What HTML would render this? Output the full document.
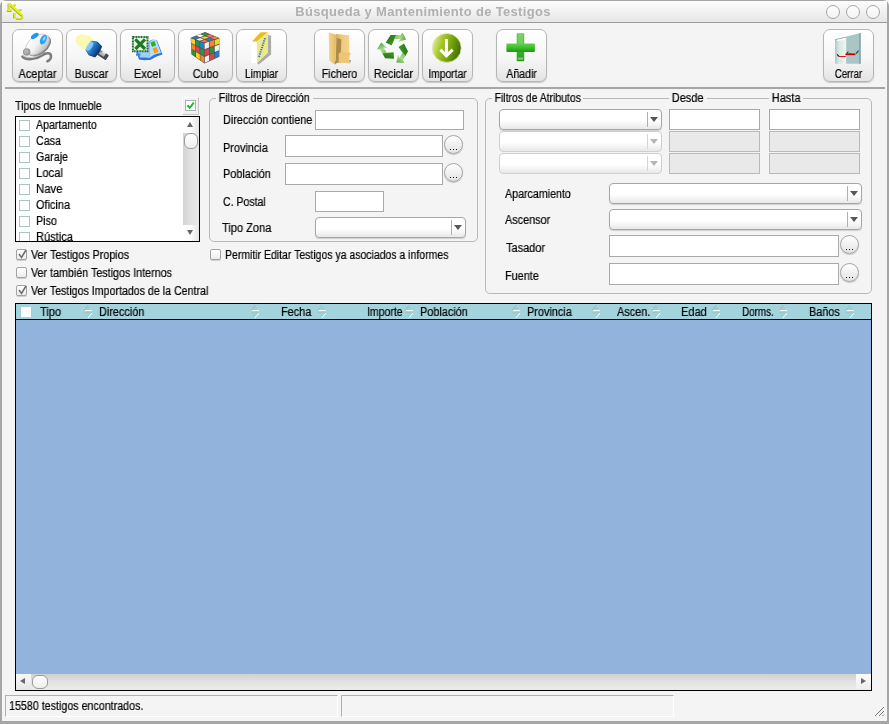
<!DOCTYPE html>
<html><head><meta charset="utf-8">
<style>
*{box-sizing:border-box;margin:0;padding:0}
html,body{width:889px;height:724px;overflow:hidden;background:#f4f4f4}
body{font-family:"Liberation Sans",sans-serif;font-size:12px;color:#000;-webkit-text-stroke:0.2px #000;position:relative}
.abs{position:absolute}
#win{position:absolute;left:0;top:0;width:889px;height:724px;background:#f4f4f4;border-radius:6px 6px 0 0;overflow:hidden}
#frameL{left:0;top:0;width:2px;height:724px;background:#a6a6a6}
#frameR{left:887px;top:0;width:2px;height:724px;background:#a6a6a6}
#frameB{left:0;top:721px;width:889px;height:3px;background:#a6a6a6}
#frameT{left:0;top:0;width:889px;height:1px;background:#a6a6a6}
#title{left:2px;top:1px;width:885px;height:22px;background:linear-gradient(#fdfdfd,#e6e6e6);border-bottom:1px solid #9a9a9a}
#ttext{-webkit-text-stroke:0;will-change:transform;left:0;top:5px;width:846px;text-align:center;font-weight:bold;font-size:12px;line-height:14px;color:#b0b0b0;letter-spacing:0.32px;white-space:nowrap;transform:scaleX(1.08)}
.wc{width:14px;height:14px;border-radius:50%;border:1px solid #a4a4a4;background:linear-gradient(#fdfdfd,#f4f4f4);top:5px}
.tb{top:29px;width:51px;height:53px;border:1px solid #b5b5b5;border-radius:7px;background:linear-gradient(#ffffff 0%,#f6f6f6 55%,#e4e4e4 100%);box-shadow:0 1px 1px #c8c8c8}
.tb span{will-change:transform;position:absolute;left:0;right:0;top:38px;text-align:center;font-size:12px;line-height:13px;white-space:nowrap;transform:scaleX(0.955)}
.lbl{white-space:nowrap;line-height:13px;will-change:transform;transform:scaleX(0.955);transform-origin:0 50%}
.inp{background:#fff;border:1px solid #a9a9a9}
.dis{background:#e9e9e9;border:1px solid #b9b9b9}
.combo{border:1px solid #a6a6a6;border-radius:4px;background:linear-gradient(#ffffff 55%,#e8e8e8);box-shadow:0 1px 1px #cfcfcf}
.combo i{position:absolute;right:13px;top:2px;bottom:2px;width:1px;background:#b0b0b0}
.combo b{position:absolute;right:3px;top:7px;width:0;height:0;border-left:4px solid transparent;border-right:4px solid transparent;border-top:5px solid #585858}
.combo.cd{border-color:#cfcfcf;box-shadow:none}
.combo.cd b{border-top-color:#b5b5b5}
.combo.cd i{background:#d5d5d5}
.dots{width:19px;height:19px;border-radius:50%;border:1px solid #a2a2a2;background:linear-gradient(#ffffff,#e2e2e2);font-size:9px;text-align:center;line-height:17px;box-shadow:0 1px 1px #c4c4c4}
.grp{border:1px solid #b8b8b8;border-radius:5px}
.gl{will-change:transform;background:#f4f4f4;padding:0 3px;white-space:nowrap;line-height:13px;transform:scaleX(0.955);transform-origin:0 50%}
.cb{width:11px;height:11px;background:#fff;border:1px solid #a9c4c4}
.ck{width:11px;height:11px;border:1px solid #a2a2a2;border-radius:2px;background:linear-gradient(#fff,#ececec);box-shadow:0 1px 0 #cfcfcf}
</style></head><body>
<div id="win">
<div class="abs" id="title"></div>
<svg class="abs" style="left:4px;top:2px" width="24" height="20" viewBox="4 2 24 20"><g fill="none" stroke-linecap="butt" stroke-linejoin="miter">
<g stroke="#a9b126" transform="translate(-0.35 0.45)">
<path d="M8.9 3.2 V9.4" stroke-width="1.9"/><path d="M8.2 4.1 H11" stroke-width="1.9"/><path d="M7.2 10.4 H11.8" stroke-width="2.3"/><path d="M10 4.4 L21.8 15" stroke-width="2.7"/><path d="M13.2 6.4 L15.6 4.4" stroke-width="2.1"/><path d="M18.4 11.2 L19.6 9.6 H22" stroke-width="1.4"/><path d="M14.5 13 V17.9" stroke-width="2.3"/><path d="M21.6 14.6 C23.6 16.2 23.2 18.5 20.6 18.6 H16.2" stroke-width="1.5"/>
</g>
<g stroke="#e3f218">
<path d="M9.1 3.2 V9.2" stroke-width="1.5"/><path d="M8.4 4 H11" stroke-width="1.6"/><path d="M7.3 10.1 H11.8" stroke-width="1.7"/><path d="M10.2 4.3 L21.8 14.7" stroke-width="2.2"/><path d="M13.4 6.2 L15.7 4.3" stroke-width="1.7"/><path d="M18.6 11 L19.7 9.5 H22" stroke-width="1.1"/><path d="M14.7 12.8 V17.6" stroke-width="1.7"/><path d="M21.7 14.4 C23.5 16 23.1 18.2 20.6 18.3 H16.4" stroke-width="1.1"/>
</g></g></svg>
<div class="abs" id="ttext">Búsqueda y Mantenimiento de Testigos</div>
<div class="abs wc" style="left:826px"></div>
<div class="abs wc" style="left:846px"></div>
<div class="abs wc" style="left:866px"></div>
<div class="abs tb" style="left:12px;width:51px"><svg class="abs" style="left:-1px;top:-1px" width="51" height="38" viewBox="0 0 51 38"><defs><linearGradient id="mg" x1="0" y1="0" x2="0.4" y2="1"><stop offset="0" stop-color="#ffffff"/><stop offset="0.6" stop-color="#f2f2f2"/><stop offset="1" stop-color="#c6c6c6"/></linearGradient></defs>
<path d="M10.4 27.6 C14 31.6 24 30.6 30 26.4 C34 23.6 38.6 23.4 39 26.6 C39.3 29 37.6 31.4 35.4 32.2" fill="none" stroke="#7d7d7d" stroke-width="2.6" stroke-linecap="round"/>
<path d="M11 26.6 C15 29.6 24 28.8 30 25" fill="none" stroke="#c4c4c4" stroke-width="1"/>
<ellipse cx="27" cy="16.6" rx="13.6" ry="8.6" transform="rotate(-37 27 16.6)" fill="#858585"/>
<ellipse cx="25.4" cy="15.6" rx="13.6" ry="8.4" transform="rotate(-37 25.4 15.6)" fill="url(#mg)" stroke="#b8b8b8" stroke-width="0.6"/>
<ellipse cx="22.8" cy="6.9" rx="4.4" ry="2.2" transform="rotate(-35 22.8 6.9)" fill="#1c98f4"/>
<ellipse cx="31.4" cy="10.6" rx="5.2" ry="3" transform="rotate(-62 31.4 10.6)" fill="#2aa2fa"/>
<ellipse cx="32.2" cy="9.6" rx="2.4" ry="1.2" transform="rotate(-62 32.2 9.6)" fill="#8fd2ff"/>
<circle cx="14.7" cy="23" r="3.8" fill="#9a9a9a"/>
<circle cx="14.2" cy="22.4" r="2.2" fill="#b6b6b6"/>
</svg><span style="transform:scaleX(0.916)">Aceptar</span></div>
<div class="abs tb" style="left:66px;width:51px"><svg class="abs" style="left:-1px;top:-1px" width="51" height="38" viewBox="0 0 51 38"><defs><linearGradient id="tg" x1="0" y1="0" x2="0" y2="1"><stop offset="0" stop-color="#f4f4f4"/><stop offset="1" stop-color="#9a9a9a"/></linearGradient><linearGradient id="tb" x1="0" y1="0" x2="1" y2="0"><stop offset="0" stop-color="#5ab4f4"/><stop offset="0.5" stop-color="#1f74c8"/><stop offset="1" stop-color="#0e3c74"/></linearGradient></defs>
<ellipse cx="19.5" cy="13.5" rx="10.8" ry="7.2" transform="rotate(27 19.5 13.5)" fill="#fbf8b2"/>
<g transform="rotate(33 28 20)">
<rect x="31" y="17" width="13" height="6.2" rx="1" fill="#4a4a4a"/>
<rect x="30" y="16.5" width="10.5" height="5" fill="url(#tg)"/>
<rect x="33" y="17.3" width="3.4" height="2" fill="#8a8a8a"/>
<path d="M21.5 14.5 L27 12 L33.5 13.5 L34.5 20 L33.5 26.5 L27 28 L21.5 25.5 Z" fill="#123a6c"/>
<path d="M21 15 L26.5 12.6 L32 14 L33 20 L32 26 L26.5 27.4 L21 25 Z" fill="url(#tb)"/>
<ellipse cx="22.8" cy="20" rx="2.6" ry="5" fill="#8fd0ff" opacity="0.85"/>
</g></svg><span style="transform:scaleX(0.899)">Buscar</span></div>
<div class="abs tb" style="left:120px;width:55px"><svg class="abs" style="left:-1px;top:-1px" width="55" height="38" viewBox="0 0 55 38"><defs></defs>
<path d="M16 22 L19 30.5 C23 31.5 27 31 30 31 C32 30.5 34 28 42.5 25.5 L37 11.5 C34 10 31 10.5 29 12.5 Z" fill="#2c78de"/>
<path d="M17 21 L20 28.5 C24 29 27 28.6 29.5 29 L29.5 13 C27 12 20 14 17 21 Z" fill="#9fd0f8"/>
<path d="M29.5 13 C32 10.6 34.5 10.2 36.5 11.5 L41 24 C37 24.5 32.5 26 29.5 29 Z" fill="#b9dcfa"/>
<path d="M30.5 13.5 L34.5 12 L36 16.5 L32 18 Z" fill="#2fae2c"/>
<path d="M32.6 19.6 L36.6 18 L38.4 22.8 L34.4 24.4 Z" fill="#f79a1e"/>
<rect x="16" y="24.5" width="4.5" height="2.2" fill="#3a86ea"/>
<rect x="12.9" y="7.9" width="14.6" height="14.4" fill="#eef4ee" stroke="#1a6e1e" stroke-width="2" stroke-dasharray="1.1 0.5"/>
<path d="M15.4 10.4 L25 20 M25 10.4 L15.4 20" stroke="#1d7e24" stroke-width="3.2"/>
<path d="M15.2 10.2 L25.4 20.4" stroke="#156a1c" stroke-width="1" stroke-dasharray="1 1"/>
</svg><span style="transform:scaleX(0.913)">Excel</span></div>
<div class="abs tb" style="left:178px;width:55px"><svg class="abs" style="left:-1px;top:-1px" width="55" height="38" viewBox="0 0 55 38"><defs></defs><polygon points="27.1,3.1 41.4,8.9 41.4,27.7 26.5,34.4 13.5,25.5 12.7,8.7" fill="#5a4c44"/><polygon points="13.02,9.20 16.91,10.72 17.10,15.90 13.25,14.06" fill="#f6d422"/><polygon points="17.52,10.96 21.41,12.48 21.54,18.01 17.70,16.18" fill="#22964a"/><polygon points="22.01,12.72 25.90,14.24 25.99,20.13 22.15,18.30" fill="#1f80d6"/><polygon points="13.28,14.82 17.13,16.70 17.31,21.88 13.51,19.69" fill="#f5842a"/><polygon points="17.73,17.00 21.57,18.88 21.70,24.41 17.90,22.22" fill="#dc4452"/><polygon points="22.17,19.17 26.01,21.05 26.10,26.93 22.30,24.75" fill="#22964a"/><polygon points="13.55,20.45 17.34,22.69 17.53,27.86 13.77,25.32" fill="#22964a"/><polygon points="17.93,23.04 21.73,25.27 21.86,30.80 18.11,28.26" fill="#f6d422"/><polygon points="22.32,25.62 26.11,27.85 26.20,33.74 22.45,31.20" fill="#f5842a"/><polygon points="26.55,14.25 30.93,12.80 30.99,18.55 26.63,20.15" fill="#eeeeee"/><polygon points="31.61,12.57 35.99,11.12 36.02,16.71 31.67,18.30" fill="#f5842a"/><polygon points="36.68,10.89 41.06,9.44 41.06,14.87 36.70,16.46" fill="#f6d422"/><polygon points="26.65,21.07 31.00,19.45 31.06,25.21 26.73,26.97" fill="#dc4452"/><polygon points="31.68,19.20 36.03,17.58 36.06,23.18 31.73,24.94" fill="#22964a"/><polygon points="36.71,17.33 41.06,15.72 41.06,21.15 36.74,22.90" fill="#eeeeee"/><polygon points="26.74,27.89 31.07,26.11 31.13,31.87 26.83,33.79" fill="#eeeeee"/><polygon points="31.74,25.83 36.06,24.05 36.10,29.65 31.80,31.57" fill="#dc4452"/><polygon points="36.74,23.77 41.06,22.00 41.06,27.43 36.77,29.35" fill="#1f80d6"/><polygon points="13.54,8.69 17.48,7.16 21.24,8.63 17.23,10.11" fill="#1f80d6"/><polygon points="18.35,6.83 22.29,5.30 26.12,6.83 22.12,8.31" fill="#fafafa"/><polygon points="23.15,4.97 27.10,3.44 31.00,5.02 27.00,6.50" fill="#22964a"/><polygon points="18.05,10.43 22.06,8.96 25.82,10.43 21.74,11.85" fill="#eeeeee"/><polygon points="22.94,8.63 26.96,7.16 30.79,8.69 26.71,10.11" fill="#f6d422"/><polygon points="27.84,6.84 31.85,5.37 35.76,6.95 31.68,8.38" fill="#ee6d78"/><polygon points="22.55,12.17 26.64,10.75 30.40,12.22 26.25,13.59" fill="#ee6d78"/><polygon points="27.54,10.44 31.63,9.02 35.46,10.55 31.31,11.92" fill="#1f80d6"/><polygon points="32.53,8.71 36.61,7.30 40.52,8.88 36.37,10.25" fill="#f5842a"/></svg><span style="transform:scaleX(0.891)">Cubo</span></div>
<div class="abs tb" style="left:236px;width:51px"><svg class="abs" style="left:-1px;top:-1px" width="51" height="38" viewBox="0 0 51 38"><defs></defs>
<polygon points="32,5.7 35.1,6.9 35.1,25.5 22.8,35.6 20.9,34.1 32,23.6" fill="#ababab"/>
<rect x="15.3" y="12.5" width="5.8" height="21.6" fill="#ffffff"/>
<polygon points="16,12.5 24.6,3.2 32,3.2 20.9,12.5" fill="#e6be1e"/>
<polygon points="20.9,12.5 32,3.2 32,23.6 20.9,34.1" fill="#ece98c"/>
<path d="M29 9.2 L22.9 28" stroke="#2468d8" stroke-width="2" stroke-dasharray="1.2 1.1"/>
</svg><span style="transform:scaleX(0.838)">Limpiar</span></div>
<div class="abs tb" style="left:314px;width:51px"><svg class="abs" style="left:-1px;top:-1px" width="51" height="38" viewBox="0 0 51 38"><defs><linearGradient id="ff" x1="0" y1="0" x2="1" y2="0"><stop offset="0" stop-color="#f6d68c"/><stop offset="1" stop-color="#e2ba64"/></linearGradient><linearGradient id="fb" x1="0" y1="0" x2="1" y2="0"><stop offset="0" stop-color="#d8ae5c"/><stop offset="0.5" stop-color="#f0cc80"/><stop offset="1" stop-color="#f4d48a"/></linearGradient></defs>
<polygon points="22,5 35.1,6.3 35.7,34.1 21.5,34.1" fill="url(#fb)"/>
<polygon points="22.8,8.8 27.3,10.6 26.8,23.6 24.8,24.8 24.8,33 21.5,34.3" fill="#a98c4e"/>
<polygon points="24.8,24.8 27.4,22.5 36.4,24 36.4,34.5 24.8,33" fill="#ecc576"/>
<rect x="35.5" y="26" width="1.2" height="6" fill="#f8f8f8"/><rect x="35.6" y="31" width="1.1" height="1.6" fill="#3c84e8"/>
<polygon points="14.7,3.2 22.1,5.7 21.5,36 15.3,31.7" fill="url(#ff)"/>
<rect x="21.3" y="32.3" width="0.9" height="2.6" fill="#3c84e8"/>
</svg><span style="transform:scaleX(0.885)">Fichero</span></div>
<div class="abs tb" style="left:368px;width:51px"><svg class="abs" style="left:-1px;top:-1px" width="51" height="38" viewBox="0 0 51 38"><defs><linearGradient id="rd" x1="0" y1="0" x2="1" y2="1"><stop offset="0" stop-color="#1d6a0c"/><stop offset="1" stop-color="#4aa62a"/></linearGradient><linearGradient id="rl" x1="0" y1="0" x2="1" y2="0"><stop offset="0" stop-color="#5cb43c"/><stop offset="0.6" stop-color="#a8dc90"/><stop offset="1" stop-color="#54a838"/></linearGradient></defs><g transform="translate(26.6 19.2) rotate(0) scale(0.93)"><path d="M-9.5 -6.2 L-4.2 -14.2 L1.8 -14.2 L-3.2 -3.0 Z" fill="url(#rd)"/><path d="M-4.2 -14.2 L6.5 -14.2 L8.6 -17 L12.4 -9.4 L4.2 -6.6 L6.2 -9.8 L-0.5 -9.8 L1.8 -14.2 Z" fill="url(#rl)"/></g><g transform="translate(26.6 19.2) rotate(120) scale(0.93)"><path d="M-9.5 -6.2 L-4.2 -14.2 L1.8 -14.2 L-3.2 -3.0 Z" fill="url(#rd)"/><path d="M-4.2 -14.2 L6.5 -14.2 L8.6 -17 L12.4 -9.4 L4.2 -6.6 L6.2 -9.8 L-0.5 -9.8 L1.8 -14.2 Z" fill="url(#rl)"/></g><g transform="translate(26.6 19.2) rotate(240) scale(0.93)"><path d="M-9.5 -6.2 L-4.2 -14.2 L1.8 -14.2 L-3.2 -3.0 Z" fill="url(#rd)"/><path d="M-4.2 -14.2 L6.5 -14.2 L8.6 -17 L12.4 -9.4 L4.2 -6.6 L6.2 -9.8 L-0.5 -9.8 L1.8 -14.2 Z" fill="url(#rl)"/></g></svg><span style="transform:scaleX(0.897)">Reciclar</span></div>
<div class="abs tb" style="left:422px;width:51px"><svg class="abs" style="left:-1px;top:-1px" width="51" height="38" viewBox="0 0 51 38"><defs><linearGradient id="ig" x1="0" y1="0.3" x2="1" y2="0.6"><stop offset="0" stop-color="#e2ee9a"/><stop offset="0.3" stop-color="#a6c82a"/><stop offset="0.7" stop-color="#6a9a08"/><stop offset="1" stop-color="#3c6c00"/></linearGradient></defs>
<circle cx="24.7" cy="18.9" r="14.5" fill="url(#ig)" stroke="#e6e6c0" stroke-width="0.8"/>
<path d="M24.4 10 V26.5 M18.4 20.6 L24.4 26.8 L30.6 20.6" fill="none" stroke="#ffffff" stroke-width="3" stroke-linejoin="miter"/>
</svg><span style="transform:scaleX(0.862)">Importar</span></div>
<div class="abs tb" style="left:496px;width:51px"><svg class="abs" style="left:-1px;top:-1px" width="51" height="38" viewBox="0 0 51 38"><defs><linearGradient id="ph" x1="0" y1="0" x2="0" y2="1"><stop offset="0" stop-color="#66cf50"/><stop offset="0.5" stop-color="#3dbd2a"/><stop offset="1" stop-color="#229414"/></linearGradient><linearGradient id="pv" x1="0" y1="0" x2="0" y2="1"><stop offset="0" stop-color="#5fca4a"/><stop offset="0.6" stop-color="#3ab828"/><stop offset="1" stop-color="#239816"/></linearGradient></defs>
<rect x="20.7" y="4.3" width="7.5" height="28" rx="1" fill="url(#pv)"/>
<rect x="10.4" y="14.4" width="28.5" height="8.6" rx="1" fill="url(#ph)"/>
<rect x="21.6" y="5" width="5.6" height="9.6" fill="#7fd46c" opacity="0.75"/>
<rect x="21.6" y="28.6" width="5.6" height="2" fill="#8fe07c" opacity="0.8"/>
</svg><span style="transform:scaleX(0.888)">Añadir</span></div>
<div class="abs tb" style="left:823px;width:51px"><svg class="abs" style="left:-1px;top:-1px" width="51" height="38" viewBox="0 0 51 38"><defs><linearGradient id="dl" x1="0" y1="0" x2="1" y2="0"><stop offset="0" stop-color="#a8c6c8"/><stop offset="0.35" stop-color="#d8e8e4"/><stop offset="1" stop-color="#eef8f0"/></linearGradient></defs>
<polygon points="12,10.3 23.2,7.8 23.2,34.7 12,34.7" fill="url(#dl)"/>
<polygon points="12,10.3 23.2,7.8 23.2,9 12,11.4" fill="#8fb0b0"/>
<rect x="13.8" y="9.8" width="9.4" height="1.6" fill="#ffffff" transform="skewY(-12) translate(0 3.9)"/>
<polygon points="23.2,7.4 37.7,4 37.7,34.7 23.2,34.7" fill="#a9c5c5"/>
<polygon points="36,4.4 37.7,4 37.7,34.7 36,34.7" fill="#86a8b0"/>
<path d="M15.8 27.5 H22.8" stroke="#ee1010" stroke-width="1"/>
<path d="M14.2 25.4 L15.8 27.3" stroke="#111" stroke-width="1.2"/>
<path d="M22.4 25.3 H32.4" stroke="#c40000" stroke-width="1.7"/>
<rect x="26.2" y="24" width="2" height="1" fill="#4a38e8"/>
<path d="M23.6 24.6 L25.4 22.6 M33 24.6 L35.6 21.6" stroke="#444" stroke-width="1.3"/>
</svg><span style="transform:scaleX(0.803)">Cerrar</span></div>
<div class="abs" style="left:5px;top:87px;width:880px;height:2px;background:#a6a6a6"></div>
<div class="abs lbl" style="left:15px;top:100px;transform:scaleX(0.883)">Tipos de Inmueble</div>
<div class="abs" style="left:182px;top:97px;width:17px;height:18px;border:1px solid #fdfdfd;border-right-color:#c4c4c4;border-bottom-color:#c4c4c4;background:#f0f0f0"><div class="abs" style="left:2px;top:2px;width:11px;height:11px;background:#fff;border:1px solid #9fb8b8"></div><svg class="abs" style="left:2px;top:2px" width="11" height="11" viewBox="0 0 11 11"><path d="M2.4 5.2 L4.8 7.8 L8.8 2.6" fill="none" stroke="#25b825" stroke-width="2"/></svg></div>
<div class="abs" style="left:15px;top:116px;width:185px;height:126px;background:#fff;border:1px solid #000;overflow:hidden">
<div class="abs cb" style="left:3px;top:3px"></div><div class="abs lbl" style="left:20px;top:2px;transform:scaleX(0.885)">Apartamento</div>
<div class="abs cb" style="left:3px;top:19px"></div><div class="abs lbl" style="left:20px;top:18px;transform:scaleX(0.894)">Casa</div>
<div class="abs cb" style="left:3px;top:35px"></div><div class="abs lbl" style="left:20px;top:34px;transform:scaleX(0.89)">Garaje</div>
<div class="abs cb" style="left:3px;top:51px"></div><div class="abs lbl" style="left:20px;top:50px;transform:scaleX(0.943)">Local</div>
<div class="abs cb" style="left:3px;top:67px"></div><div class="abs lbl" style="left:20px;top:66px;transform:scaleX(0.948)">Nave</div>
<div class="abs cb" style="left:3px;top:83px"></div><div class="abs lbl" style="left:20px;top:82px;transform:scaleX(0.911)">Oficina</div>
<div class="abs cb" style="left:3px;top:99px"></div><div class="abs lbl" style="left:20px;top:98px;transform:scaleX(0.891)">Piso</div>
<div class="abs cb" style="left:3px;top:115px"></div><div class="abs lbl" style="left:20px;top:114px;transform:scaleX(0.926)">Rústica</div>
<div class="abs" style="left:167px;top:0;width:16px;height:124px;background:linear-gradient(90deg,#d2d2d2,#e2e2e2 50%,#e8e8e8)"></div>
<div class="abs" style="left:167px;top:0;width:16px;height:16px;background:linear-gradient(90deg,#ffffff,#fbfbfb 50%,#e4e4e4)"></div>
<div class="abs" style="left:167px;top:108px;width:16px;height:16px;background:linear-gradient(90deg,#ffffff,#fbfbfb 50%,#e4e4e4)"></div>
<div class="abs" style="left:171px;top:5px;width:0;height:0;border-left:3.5px solid transparent;border-right:3.5px solid transparent;border-bottom:5px solid #666"></div>
<div class="abs" style="left:171px;top:113px;width:0;height:0;border-left:3.5px solid transparent;border-right:3.5px solid transparent;border-top:5px solid #666"></div>
<div class="abs" style="left:168px;top:16px;width:14px;height:16px;border:1px solid #9a9a9a;border-radius:6px;background:linear-gradient(#fff,#eee)"></div>
</div>
<div class="abs ck" style="left:16px;top:249px"></div><svg class="abs" style="left:16px;top:248px" width="13" height="13" viewBox="0 0 13 13"><path d="M3 6 L5.5 9.5 L10 2" fill="none" stroke="#6a6a6a" stroke-width="1.5"/></svg><div class="abs lbl" style="left:31px;top:249px;transform:scaleX(0.898)">Ver Testigos Propios</div>
<div class="abs ck" style="left:16px;top:267px"></div><div class="abs lbl" style="left:31px;top:267px;transform:scaleX(0.893)">Ver también Testigos Internos</div>
<div class="abs ck" style="left:16px;top:285px"></div><svg class="abs" style="left:16px;top:284px" width="13" height="13" viewBox="0 0 13 13"><path d="M3 6 L5.5 9.5 L10 2" fill="none" stroke="#6a6a6a" stroke-width="1.5"/></svg><div class="abs lbl" style="left:31px;top:285px;transform:scaleX(0.887)">Ver Testigos Importados de la Central</div>
<div class="abs ck" style="left:210px;top:249px"></div><div class="abs lbl" style="left:225px;top:249px;transform:scaleX(0.873)">Permitir Editar Testigos ya asociados a informes</div>
<div class="abs grp" style="left:209px;top:98px;width:269px;height:144px"></div>
<div class="abs gl" style="left:216px;top:92px;transform:scaleX(0.887)">Filtros de Dirección</div>
<div class="abs lbl" style="left:223px;top:114px;transform:scaleX(0.905)">Dirección contiene</div>
<div class="abs lbl" style="left:223px;top:142px;transform:scaleX(0.908)">Provincia</div>
<div class="abs lbl" style="left:223px;top:168px;transform:scaleX(0.907)">Población</div>
<div class="abs lbl" style="left:223px;top:196px;transform:scaleX(0.879)">C. Postal</div>
<div class="abs lbl" style="left:222px;top:222px;transform:scaleX(0.92)">Tipo Zona</div>
<div class="abs inp" style="left:315px;top:110px;width:149px;height:20px"></div>
<div class="abs inp" style="left:285px;top:135px;width:158px;height:22px"></div>
<div class="abs inp" style="left:285px;top:163px;width:158px;height:22px"></div>
<div class="abs inp" style="left:315px;top:191px;width:69px;height:21px"></div>
<div class="abs combo" style="left:315px;top:217px;width:151px;height:21px"><i></i><b></b></div>
<div class="abs dots" style="left:444px;top:135px"><div class="abs" style="left:5px;top:13px;width:1px;height:1px;background:#111;box-shadow:3px 0 0 #111,6px 0 0 #111"></div></div>
<div class="abs dots" style="left:444px;top:163px"><div class="abs" style="left:5px;top:13px;width:1px;height:1px;background:#111;box-shadow:3px 0 0 #111,6px 0 0 #111"></div></div>
<div class="abs grp" style="left:485px;top:98px;width:387px;height:196px"></div>
<div class="abs gl" style="left:492px;top:92px;transform:scaleX(0.868)">Filtros de Atributos</div>
<div class="abs gl" style="left:669px;top:92px;transform:scaleX(0.917)">Desde</div>
<div class="abs gl" style="left:769px;top:92px;transform:scaleX(0.918)">Hasta</div>
<div class="abs combo" style="left:499px;top:109px;width:163px;height:21px"><i></i><b></b></div>
<div class="abs combo cd" style="left:499px;top:131px;width:163px;height:21px"><i></i><b></b></div>
<div class="abs combo cd" style="left:499px;top:153px;width:163px;height:21px"><i></i><b></b></div>
<div class="abs inp" style="left:669px;top:109px;width:91px;height:21px"></div>
<div class="abs inp" style="left:769px;top:109px;width:91px;height:21px"></div>
<div class="abs dis" style="left:669px;top:131px;width:91px;height:21px"></div>
<div class="abs dis" style="left:769px;top:131px;width:91px;height:21px"></div>
<div class="abs dis" style="left:669px;top:153px;width:91px;height:21px"></div>
<div class="abs dis" style="left:769px;top:153px;width:91px;height:21px"></div>
<div class="abs lbl" style="left:505px;top:188px;transform:scaleX(0.889)">Aparcamiento</div>
<div class="abs lbl" style="left:505px;top:214px;transform:scaleX(0.905)">Ascensor</div>
<div class="abs lbl" style="left:506px;top:242px;transform:scaleX(0.914)">Tasador</div>
<div class="abs lbl" style="left:505px;top:270px;transform:scaleX(0.905)">Fuente</div>
<div class="abs combo" style="left:609px;top:183px;width:253px;height:21px"><i></i><b></b></div>
<div class="abs combo" style="left:609px;top:209px;width:253px;height:21px"><i></i><b></b></div>
<div class="abs inp" style="left:609px;top:235px;width:230px;height:22px"></div>
<div class="abs inp" style="left:609px;top:263px;width:230px;height:22px"></div>
<div class="abs dots" style="left:840px;top:235px"><div class="abs" style="left:5px;top:13px;width:1px;height:1px;background:#111;box-shadow:3px 0 0 #111,6px 0 0 #111"></div></div>
<div class="abs dots" style="left:840px;top:263px"><div class="abs" style="left:5px;top:13px;width:1px;height:1px;background:#111;box-shadow:3px 0 0 #111,6px 0 0 #111"></div></div>
<div class="abs" style="left:15px;top:303px;width:857px;height:388px;background:#91b3dc;border:1px solid #000"></div>
<div class="abs" style="left:16px;top:304px;width:855px;height:16px;background:#a3d3dc;border-bottom:1px solid #000"></div>
<div class="abs" style="left:21px;top:307px;width:10px;height:10px;background:#fff"></div>
<div class="abs lbl" style="left:40px;top:306px;transform:scaleX(0.919)">Tipo</div>
<svg class="abs" style="left:84px;top:305px" width="9" height="14" viewBox="0 0 9 14"><path d="M3.9 0.4 L0.3 5.2 L8 5.2 Z" fill="#8fd3dc"/><path d="M3.9 0.4 L0.4 5" stroke="#9fb7b7" stroke-width="0.9" fill="none"/><rect x="1" y="5" width="7" height="1" fill="#ffffff"/><path d="M0.3 7.4 L8 7.4 L3.8 12.8 Z" fill="#8fd7df"/><path d="M0.3 7.5 H8" stroke="#a9c1b9" stroke-width="0.9"/><path d="M7.9 8 L3.9 13" stroke="#f4ffff" stroke-width="1" fill="none"/></svg>
<div class="abs lbl" style="left:99px;top:306px;transform:scaleX(0.906)">Dirección</div>
<svg class="abs" style="left:251px;top:305px" width="9" height="14" viewBox="0 0 9 14"><path d="M3.9 0.4 L0.3 5.2 L8 5.2 Z" fill="#8fd3dc"/><path d="M3.9 0.4 L0.4 5" stroke="#9fb7b7" stroke-width="0.9" fill="none"/><rect x="1" y="5" width="7" height="1" fill="#ffffff"/><path d="M0.3 7.4 L8 7.4 L3.8 12.8 Z" fill="#8fd7df"/><path d="M0.3 7.5 H8" stroke="#a9c1b9" stroke-width="0.9"/><path d="M7.9 8 L3.9 13" stroke="#f4ffff" stroke-width="1" fill="none"/></svg>
<div class="abs lbl" style="left:281px;top:306px;transform:scaleX(0.908)">Fecha</div>
<svg class="abs" style="left:318px;top:305px" width="9" height="14" viewBox="0 0 9 14"><path d="M3.9 0.4 L0.3 5.2 L8 5.2 Z" fill="#8fd3dc"/><path d="M3.9 0.4 L0.4 5" stroke="#9fb7b7" stroke-width="0.9" fill="none"/><rect x="1" y="5" width="7" height="1" fill="#ffffff"/><path d="M0.3 7.4 L8 7.4 L3.8 12.8 Z" fill="#8fd7df"/><path d="M0.3 7.5 H8" stroke="#a9c1b9" stroke-width="0.9"/><path d="M7.9 8 L3.9 13" stroke="#f4ffff" stroke-width="1" fill="none"/></svg>
<div class="abs lbl" style="left:367px;top:306px;transform:scaleX(0.874)">Importe</div>
<svg class="abs" style="left:405px;top:305px" width="9" height="14" viewBox="0 0 9 14"><path d="M3.9 0.4 L0.3 5.2 L8 5.2 Z" fill="#8fd3dc"/><path d="M3.9 0.4 L0.4 5" stroke="#9fb7b7" stroke-width="0.9" fill="none"/><rect x="1" y="5" width="7" height="1" fill="#ffffff"/><path d="M0.3 7.4 L8 7.4 L3.8 12.8 Z" fill="#8fd7df"/><path d="M0.3 7.5 H8" stroke="#a9c1b9" stroke-width="0.9"/><path d="M7.9 8 L3.9 13" stroke="#f4ffff" stroke-width="1" fill="none"/></svg>
<div class="abs lbl" style="left:420px;top:306px;transform:scaleX(0.907)">Población</div>
<svg class="abs" style="left:512px;top:305px" width="9" height="14" viewBox="0 0 9 14"><path d="M3.9 0.4 L0.3 5.2 L8 5.2 Z" fill="#8fd3dc"/><path d="M3.9 0.4 L0.4 5" stroke="#9fb7b7" stroke-width="0.9" fill="none"/><rect x="1" y="5" width="7" height="1" fill="#ffffff"/><path d="M0.3 7.4 L8 7.4 L3.8 12.8 Z" fill="#8fd7df"/><path d="M0.3 7.5 H8" stroke="#a9c1b9" stroke-width="0.9"/><path d="M7.9 8 L3.9 13" stroke="#f4ffff" stroke-width="1" fill="none"/></svg>
<div class="abs lbl" style="left:527px;top:306px;transform:scaleX(0.908)">Provincia</div>
<svg class="abs" style="left:592px;top:305px" width="9" height="14" viewBox="0 0 9 14"><path d="M3.9 0.4 L0.3 5.2 L8 5.2 Z" fill="#8fd3dc"/><path d="M3.9 0.4 L0.4 5" stroke="#9fb7b7" stroke-width="0.9" fill="none"/><rect x="1" y="5" width="7" height="1" fill="#ffffff"/><path d="M0.3 7.4 L8 7.4 L3.8 12.8 Z" fill="#8fd7df"/><path d="M0.3 7.5 H8" stroke="#a9c1b9" stroke-width="0.9"/><path d="M7.9 8 L3.9 13" stroke="#f4ffff" stroke-width="1" fill="none"/></svg>
<div class="abs lbl" style="left:616.5px;top:306px;transform:scaleX(0.908)">Ascen.</div>
<svg class="abs" style="left:651.5px;top:305px" width="9" height="14" viewBox="0 0 9 14"><path d="M3.9 0.4 L0.3 5.2 L8 5.2 Z" fill="#8fd3dc"/><path d="M3.9 0.4 L0.4 5" stroke="#9fb7b7" stroke-width="0.9" fill="none"/><rect x="1" y="5" width="7" height="1" fill="#ffffff"/><path d="M0.3 7.4 L8 7.4 L3.8 12.8 Z" fill="#8fd7df"/><path d="M0.3 7.5 H8" stroke="#a9c1b9" stroke-width="0.9"/><path d="M7.9 8 L3.9 13" stroke="#f4ffff" stroke-width="1" fill="none"/></svg>
<div class="abs lbl" style="left:681px;top:306px;transform:scaleX(0.92)">Edad</div>
<svg class="abs" style="left:712px;top:305px" width="9" height="14" viewBox="0 0 9 14"><path d="M3.9 0.4 L0.3 5.2 L8 5.2 Z" fill="#8fd3dc"/><path d="M3.9 0.4 L0.4 5" stroke="#9fb7b7" stroke-width="0.9" fill="none"/><rect x="1" y="5" width="7" height="1" fill="#ffffff"/><path d="M0.3 7.4 L8 7.4 L3.8 12.8 Z" fill="#8fd7df"/><path d="M0.3 7.5 H8" stroke="#a9c1b9" stroke-width="0.9"/><path d="M7.9 8 L3.9 13" stroke="#f4ffff" stroke-width="1" fill="none"/></svg>
<div class="abs lbl" style="left:741.5px;top:306px;transform:scaleX(0.822)">Dorms.</div>
<svg class="abs" style="left:779px;top:305px" width="9" height="14" viewBox="0 0 9 14"><path d="M3.9 0.4 L0.3 5.2 L8 5.2 Z" fill="#8fd3dc"/><path d="M3.9 0.4 L0.4 5" stroke="#9fb7b7" stroke-width="0.9" fill="none"/><rect x="1" y="5" width="7" height="1" fill="#ffffff"/><path d="M0.3 7.4 L8 7.4 L3.8 12.8 Z" fill="#8fd7df"/><path d="M0.3 7.5 H8" stroke="#a9c1b9" stroke-width="0.9"/><path d="M7.9 8 L3.9 13" stroke="#f4ffff" stroke-width="1" fill="none"/></svg>
<div class="abs lbl" style="left:809px;top:306px;transform:scaleX(0.905)">Baños</div>
<svg class="abs" style="left:846px;top:305px" width="9" height="14" viewBox="0 0 9 14"><path d="M3.9 0.4 L0.3 5.2 L8 5.2 Z" fill="#8fd3dc"/><path d="M3.9 0.4 L0.4 5" stroke="#9fb7b7" stroke-width="0.9" fill="none"/><rect x="1" y="5" width="7" height="1" fill="#ffffff"/><path d="M0.3 7.4 L8 7.4 L3.8 12.8 Z" fill="#8fd7df"/><path d="M0.3 7.5 H8" stroke="#a9c1b9" stroke-width="0.9"/><path d="M7.9 8 L3.9 13" stroke="#f4ffff" stroke-width="1" fill="none"/></svg>
<div class="abs" style="left:16px;top:674px;width:855px;height:16px;background:linear-gradient(#d0d0d0,#e2e2e2 50%,#ececec)"></div>
<div class="abs" style="left:16px;top:674px;width:15px;height:16px;background:linear-gradient(#f8f8f8,#e6e6e6)"></div>
<div class="abs" style="left:856px;top:674px;width:15px;height:16px;background:linear-gradient(#fdfdfd,#ececec)"></div>
<div class="abs" style="left:20px;top:678px;width:0;height:0;border-top:3.5px solid transparent;border-bottom:3.5px solid transparent;border-right:5px solid #666"></div>
<div class="abs" style="left:861px;top:678px;width:0;height:0;border-top:3.5px solid transparent;border-bottom:3.5px solid transparent;border-left:5px solid #666"></div>
<div class="abs" style="left:32px;top:675px;width:16px;height:14px;border:1px solid #9a9a9a;border-radius:6px;background:linear-gradient(#fff,#eee)"></div>
<div class="abs" style="left:5px;top:695px;width:333px;height:22px;border:1px solid #b0b0b0;border-right-color:#fff;border-bottom-color:#fff"></div>
<div class="abs" style="left:341px;top:695px;width:333px;height:22px;border:1px solid #b0b0b0;border-right-color:#fff;border-bottom-color:#fff"></div>
<div class="abs lbl" style="left:9px;top:700px;transform:scaleX(0.891)">15580 testigos encontrados.</div>
<svg class="abs" style="left:875px;top:707px" width="10" height="10" viewBox="0 0 10 10"><path d="M0 9 L9 0 M4 9 L9 4 M7.5 9 L9 7.5" stroke="#777" stroke-width="1"/></svg>
<div class="abs" id="frameT"></div><div class="abs" id="frameL"></div><div class="abs" id="frameR"></div><div class="abs" id="frameB"></div>
</div>
</body></html>
